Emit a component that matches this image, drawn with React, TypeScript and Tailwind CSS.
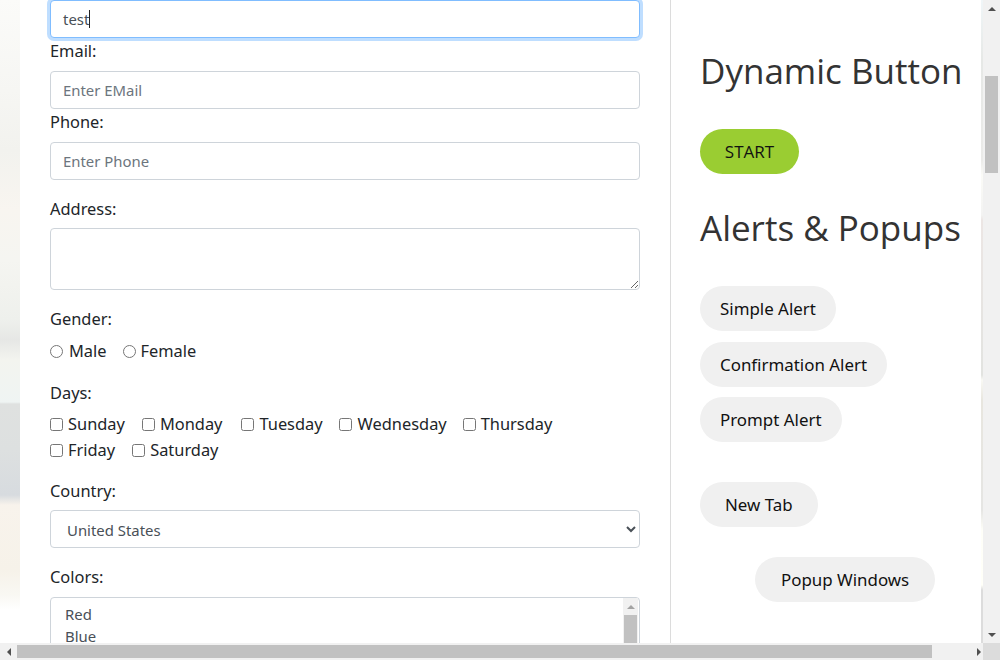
import React from 'react';

const labelClass = "block leading-6 text-[16.4px] text-[#212529]";
const inputClass = "block w-full h-[38px] px-[12px] border border-[#ced4da] rounded-[4px] bg-white text-[14.9px] text-[#495057] placeholder:text-[#6c757d] outline-none font-['Noto_Sans',sans-serif]";
const pillClass = "block h-[45px] rounded-[23px] bg-[#f0f0f0] text-[16.9px] text-[#111] font-['Noto_Sans',sans-serif]";

const days = [
  [
    { name: 'Sunday', ml: 'mr-[5px]', mr: 'mr-[17px]' },
    { name: 'Monday', ml: 'mr-[5px]', mr: 'mr-[19px]' },
    { name: 'Tuesday', ml: 'mr-[5px]', mr: 'mr-[16px]' },
    { name: 'Wednesday', ml: 'mr-[6px]', mr: 'mr-[16px]' },
    { name: 'Thursday', ml: 'mr-[5px]', mr: '' },
  ],
  [
    { name: 'Friday', ml: 'mr-[5px]', mr: 'mr-[17px]' },
    { name: 'Saturday', ml: 'mr-[5px]', mr: '' },
  ],
];

const Arrow: React.FC<{ dir: 'up' | 'down' | 'left' | 'right'; color?: string }> = ({ dir, color = '#505050' }) => {
  const points = {
    up: '4,0 8,4 0,4',
    down: '0,0 8,0 4,4',
    left: '4,0 4,8 0,4',
    right: '0,0 4,4 0,8',
  }[dir];
  const vertical = dir === 'up' || dir === 'down';
  return (
    <svg width={vertical ? 8 : 4} height={vertical ? 4 : 8}>
      <polygon points={points} fill={color} />
    </svg>
  );
};

const App: React.FC = () => {
  return (
    <div className="w-[1000px] h-[660px] overflow-hidden flex flex-col font-['Noto_Sans',sans-serif]">
      <div className="flex h-[643px]">
        <div className="w-[20px] shrink-0 bg-[linear-gradient(180deg,#fbfbf9_0px,#f6f6f3_90px,#f2f2ee_150px,#f8f5f0_210px,#f5f5f1_260px,#eef0ec_320px,#e6e7e5_340px,#f3f4ef_360px,#eff4f3_402px,#dfe1e0_404px,#dde0e0_450px,#d7dbdf_495px,#f8f3ec_505px,#f6f2e9_570px,#f9f8f3_595px,#ffffff_610px)]" />

        <div className="w-[651px] shrink-0 border-r border-[#dcdcdc] bg-white px-[30px] overflow-hidden">
          <div className="h-[38px] flex items-center px-[12px] border border-[#80bdff] rounded-[4px] bg-white shadow-[0_0_0_3px_rgba(0,123,255,0.25)] text-[14.9px] text-[#495057]">
            test<span className="inline-block w-px h-[18px] bg-[#222]" />
          </div>

          <label className={`${labelClass} mt-px mb-2`}>Email:</label>
          <input className={inputClass} placeholder="Enter EMail" />
          <label className={`${labelClass} mt-px mb-2`}>Phone:</label>
          <input className={inputClass} placeholder="Enter Phone" />

          <label className={`${labelClass} mt-[17px] mb-[7px]`}>Address:</label>
          <textarea className="block w-full h-[62px] border border-[#ced4da] rounded-[4px] outline-none" />

          <label className={`${labelClass} mt-[17px]`}>Gender:</label>
          <div className="flex items-center h-6 mt-2 text-[16.4px] text-[#212529]">
            <input type="radio" name="gender" className="w-[13px] h-[13px] mr-[6px] m-0" />
            <span className="mr-[16px]">Male</span>
            <input type="radio" name="gender" className="w-[13px] h-[13px] mr-[5px] m-0" />
            <span>Female</span>
          </div>

          <label className={`${labelClass} mt-[18px] mb-[7px]`}>Days:</label>
          {days.map((row, i) => (
            <div key={i} className={`flex items-center h-[25px] text-[16.4px] text-[#212529] ${i === 1 ? 'mt-px' : ''}`}>
              {row.map((d) => (
                <React.Fragment key={d.name}>
                  <input type="checkbox" className={`w-[13px] h-[13px] m-0 ${d.ml}`} />
                  <span className={d.mr}>{d.name}</span>
                </React.Fragment>
              ))}
            </div>
          ))}

          <label className={`${labelClass} mt-[16px] mb-[7px]`}>Country:</label>
          <select className="block w-full h-[38px] pl-[12px] pr-0 pt-px border border-[#ced4da] rounded-[4px] bg-white text-[14.9px] text-[#495057] outline-none">
            <option>United States</option>
          </select>

          <label className={`${labelClass} mt-[17px] mb-2`}>Colors:</label>
          <div className="flex h-[100px] border border-[#ced4da] rounded-[4px] bg-white">
            <div className="flex-1 pl-[14px] pt-[5px] text-[14.9px] leading-[22px] text-[#495057]">
              <div>Red</div>
              <div>Blue</div>
            </div>
            <div className="w-[15px] mr-px bg-[#f1f1f1] flex flex-col items-center">
              <div className="h-[17px] flex items-center justify-center">
                <Arrow dir="up" color="#a3a3a3" />
              </div>
              <div className="w-[13px] h-[60px] bg-[#c1c1c1]" />
            </div>
          </div>
        </div>

        <div className="w-[310px] shrink-0 bg-white pl-[29px] overflow-hidden">
          <h2 className="mt-[47px] h-[48px] leading-[48px] text-[35px] text-[#333] whitespace-nowrap font-['Open_Sans',sans-serif]">Dynamic Button</h2>
          <button className="mt-[34px] block w-[99px] h-[45px] rounded-[23px] bg-[#9acd32] text-[17px] text-[#111] font-['Open_Sans',sans-serif]">START</button>
          <h2 className="mt-[30px] h-[48px] leading-[48px] text-[35px] text-[#333] whitespace-nowrap font-['Open_Sans',sans-serif]">Alerts &amp; Popups</h2>
          <button className={`${pillClass} mt-[34px] px-[20px]`}>Simple Alert</button>
          <button className={`${pillClass} mt-[11px] px-[20px]`}>Confirmation Alert</button>
          <button className={`${pillClass} mt-[10px] px-[20px]`}>Prompt Alert</button>
          <button className={`${pillClass} mt-[40px] px-[25px]`}>New Tab</button>
          <button className={`${pillClass} mt-[30px] ml-[55px] px-[26px]`}>Popup Windows</button>
        </div>

        <div className="w-[2px] shrink-0 bg-[linear-gradient(180deg,#f0f6f8_0px,#e6e8e6_60px,#ebebe9_160px,#fbfbf7_175px,#f3f3f2_215px,#ece6e4_220px,#e2e3e0_375px,#f9f9f4_380px,#e8e6df_400px,#e5e5e3_510px,#fefef8_530px,#fffff8_585px,#dcdcdc_590px)]" />

        <div className="w-[17px] shrink-0 bg-[#f1f1f1] flex flex-col items-center">
          <div className="h-[17px] flex items-center justify-center">
            <Arrow dir="up" />
          </div>
          <div className="mt-[59px] w-[13px] h-[97px] bg-[#c1c1c1]" />
          <div className="mt-auto h-[17px] flex items-center justify-center">
            <Arrow dir="down" />
          </div>
        </div>
      </div>

      <div className="flex h-[17px] bg-[#f1f1f1]">
        <div className="w-[17px] flex items-center justify-center">
          <Arrow dir="left" />
        </div>
        <div className="w-[915px] h-[13px] mt-[2px] bg-[#c1c1c1]" />
        <div className="w-[51px] flex items-center justify-end pr-[2px]">
          <Arrow dir="right" />
        </div>
        <div className="w-[17px] bg-[#dcdcdc]" />
      </div>
    </div>
  );
};

export default App;
